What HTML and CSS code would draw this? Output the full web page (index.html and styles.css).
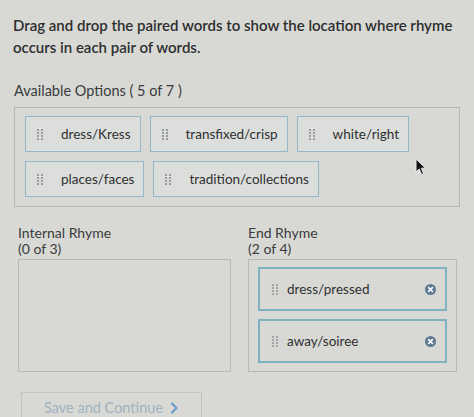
FILE: index.html
```html
<!DOCTYPE html>
<html lang="en">
<head>
<meta charset="utf-8">
<title>Rhyme location</title>
<link rel="stylesheet" href="styles.css">
</head>
<body>
<main class="page">
  <p class="prompt">Drag and drop the paired words to show the location where rhyme occurs in each pair of words.</p>
  <h2 class="avail">Available Options ( 5 of 7 )</h2>
  <div class="options">
    <div class="chip"><svg class="grip" viewBox="0 0 6 11" width="6" height="11"><g fill="#7a7d80"><circle cx="1" cy="1" r=".9"/><circle cx="5" cy="1" r=".9"/><circle cx="1" cy="4" r=".9"/><circle cx="5" cy="4" r=".9"/><circle cx="1" cy="7" r=".9"/><circle cx="5" cy="7" r=".9"/><circle cx="1" cy="10" r=".9"/><circle cx="5" cy="10" r=".9"/></g></svg><span>dress/Kress</span></div>
    <div class="chip"><svg class="grip" viewBox="0 0 6 11" width="6" height="11"><g fill="#7a7d80"><circle cx="1" cy="1" r=".9"/><circle cx="5" cy="1" r=".9"/><circle cx="1" cy="4" r=".9"/><circle cx="5" cy="4" r=".9"/><circle cx="1" cy="7" r=".9"/><circle cx="5" cy="7" r=".9"/><circle cx="1" cy="10" r=".9"/><circle cx="5" cy="10" r=".9"/></g></svg><span>transfixed/crisp</span></div>
    <div class="chip"><svg class="grip" viewBox="0 0 6 11" width="6" height="11"><g fill="#7a7d80"><circle cx="1" cy="1" r=".9"/><circle cx="5" cy="1" r=".9"/><circle cx="1" cy="4" r=".9"/><circle cx="5" cy="4" r=".9"/><circle cx="1" cy="7" r=".9"/><circle cx="5" cy="7" r=".9"/><circle cx="1" cy="10" r=".9"/><circle cx="5" cy="10" r=".9"/></g></svg><span>white/right</span></div>
    <div class="chip"><svg class="grip" viewBox="0 0 6 11" width="6" height="11"><g fill="#7a7d80"><circle cx="1" cy="1" r=".9"/><circle cx="5" cy="1" r=".9"/><circle cx="1" cy="4" r=".9"/><circle cx="5" cy="4" r=".9"/><circle cx="1" cy="7" r=".9"/><circle cx="5" cy="7" r=".9"/><circle cx="1" cy="10" r=".9"/><circle cx="5" cy="10" r=".9"/></g></svg><span>places/faces</span></div>
    <div class="chip"><svg class="grip" viewBox="0 0 6 11" width="6" height="11"><g fill="#7a7d80"><circle cx="1" cy="1" r=".9"/><circle cx="5" cy="1" r=".9"/><circle cx="1" cy="4" r=".9"/><circle cx="5" cy="4" r=".9"/><circle cx="1" cy="7" r=".9"/><circle cx="5" cy="7" r=".9"/><circle cx="1" cy="10" r=".9"/><circle cx="5" cy="10" r=".9"/></g></svg><span>tradition/collections</span></div>
  </div>

  <div class="targets">
    <section class="target">
      <h3 class="target-label">Internal Rhyme<br>(0 of 3)</h3>
      <div class="drop"></div>
    </section>
    <section class="target">
      <h3 class="target-label">End Rhyme<br>(2 of 4)</h3>
      <div class="drop">
        <div class="placed"><svg class="grip" viewBox="0 0 6 11" width="6" height="11"><g fill="#8a8d90"><circle cx="1" cy="1" r=".9"/><circle cx="5" cy="1" r=".9"/><circle cx="1" cy="4" r=".9"/><circle cx="5" cy="4" r=".9"/><circle cx="1" cy="7" r=".9"/><circle cx="5" cy="7" r=".9"/><circle cx="1" cy="10" r=".9"/><circle cx="5" cy="10" r=".9"/></g></svg><span class="placed-text">dress/pressed</span><svg class="remove" viewBox="0 0 10 10" width="11" height="11"><circle cx="5" cy="5" r="5" fill="#5f7a94"/><path d="M3.3 3.3 L6.7 6.7 M6.7 3.3 L3.3 6.7" stroke="#fff" stroke-width="1.4" stroke-linecap="round"/></svg></div>
        <div class="placed"><svg class="grip" viewBox="0 0 6 11" width="6" height="11"><g fill="#8a8d90"><circle cx="1" cy="1" r=".9"/><circle cx="5" cy="1" r=".9"/><circle cx="1" cy="4" r=".9"/><circle cx="5" cy="4" r=".9"/><circle cx="1" cy="7" r=".9"/><circle cx="5" cy="7" r=".9"/><circle cx="1" cy="10" r=".9"/><circle cx="5" cy="10" r=".9"/></g></svg><span class="placed-text">away/soiree</span><svg class="remove" viewBox="0 0 10 10" width="11" height="11"><circle cx="5" cy="5" r="5" fill="#5f7a94"/><path d="M3.3 3.3 L6.7 6.7 M6.7 3.3 L3.3 6.7" stroke="#fff" stroke-width="1.4" stroke-linecap="round"/></svg></div>
      </div>
    </section>
  </div>

  <button class="save" type="button">Save and Continue <svg class="chev" viewBox="0 0 8 12" width="8" height="12"><path d="M2 1.5 L6.5 6 L2 10.5" fill="none" stroke="#6d9cc8" stroke-width="2.2" stroke-linecap="round" stroke-linejoin="round"/></svg></button>
</main>
<svg class="cursor" viewBox="0 0 12 18" width="12" height="18"><path d="M1 1 L1 14 L4.2 11 L6.6 16.5 L8.6 15.6 L6.3 10.2 L10.6 10.2 Z" fill="#111" stroke="#e8ecee" stroke-width="1"/></svg>
</body>
</html>
```
FILE: styles.css
```css
html, body {
  margin: 0;
  padding: 0;
  background: #d8d9d4;
}
body {
  font-family: "Lato", "Open Sans", "Liberation Sans", sans-serif;
  color: #2f3031;
  width: 474px;
  height: 417px;
  overflow: hidden;
  position: relative;
}
.page {
  padding: 14px 10px 0 13px;
}
.prompt {
  margin: 0;
  font-size: 15px;
  line-height: 22px;
  font-weight: 600;
  color: #2d2e2f;
}
.avail {
  margin: 23px 0 6px 1px;
  font-size: 14.5px;
  line-height: 20px;
  font-weight: 400;
  color: #3a3b3c;
}
.options {
  margin-left: 1px;
  border: 1px solid #b7b8b3;
  padding: 8px 10px 9px;
  display: flex;
  flex-wrap: wrap;
  gap: 9px;
  width: 424px;
}
.chip {
  height: 36px;
  box-sizing: border-box;
  border: 1.5px solid #92b6ca;
  background: #dcdedb;
  display: flex;
  align-items: center;
  padding: 0 9px 0 11px;
  font-size: 13.5px;
  color: #2f3031;
}
.chip .grip {
  margin-right: 18px;
  flex: none;
}
.targets {
  margin: 18px 0 0 5px;
  display: grid;
  grid-template-columns: 213px 209px;
  column-gap: 17px;
}
.target-label {
  margin: 0 0 2px;
  font-size: 14px;
  line-height: 16px;
  font-weight: 400;
  color: #3a3b3c;
}
.drop {
  height: 113px;
  box-sizing: border-box;
  border: 1px solid #b9bab5;
  padding: 7px 9px 0 9px;
  display: flex;
  flex-direction: column;
  gap: 8px;
}
.placed {
  height: 44px;
  box-sizing: border-box;
  border: 2px solid #7fb2c1;
  display: flex;
  align-items: center;
  padding: 0 9px 0 12px;
  font-size: 13.5px;
  color: #2f3031;
}
.placed .grip {
  margin-right: 9px;
  flex: none;
}
.placed-text {
  flex: 1;
}
.remove {
  flex: none;
}
.save {
  margin: 20px 0 0 8px;
  width: 181px;
  height: 36px;
  box-sizing: border-box;
  border: 1px solid #c2c4c0;
  background: transparent;
  display: flex;
  align-items: flex-start;
  padding: 7px 0 0 22px;
  font-family: "Lato", "Open Sans", "Liberation Sans", sans-serif;
  font-size: 14.5px;
  line-height: 16px;
  color: #a0b2c0;
  gap: 7px;
}
.chev {
  flex: none;
  margin-top: 2px;
}
.cursor {
  position: absolute;
  left: 415px;
  top: 158px;
}
```
